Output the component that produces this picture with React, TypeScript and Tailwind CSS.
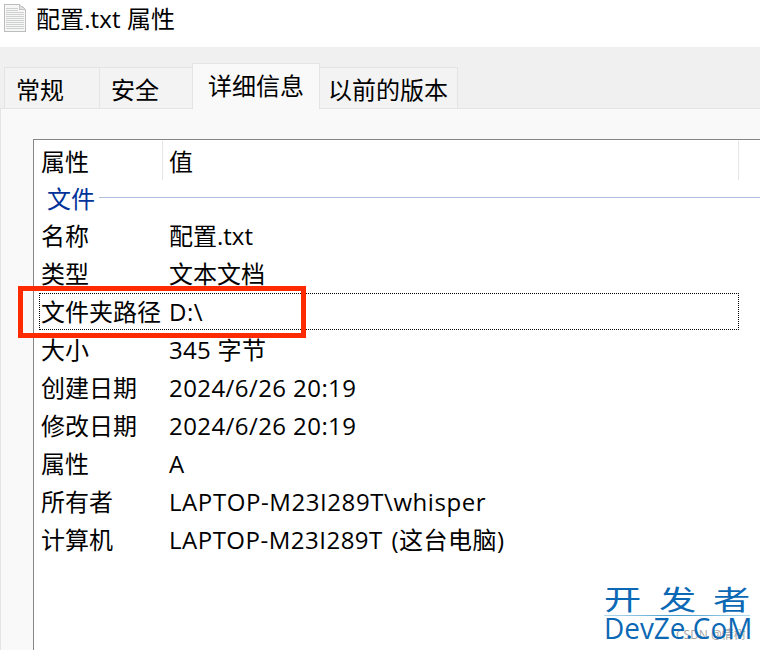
import clsx from "clsx";

const rows = [
  { name: "名称", value: "配置.txt", spacing: "tracking-normal" },
  { name: "类型", value: "文本文档", spacing: "tracking-normal" },
  { name: "文件夹路径", value: "D:\\", spacing: "tracking-[0.5px]", focused: true },
  { name: "大小", value: "345 字节", spacing: "tracking-[0.3px]" },
  { name: "创建日期", value: "2024/6/26 20:19", spacing: "tracking-[0.42px]" },
  { name: "修改日期", value: "2024/6/26 20:19", spacing: "tracking-[0.42px]" },
  { name: "属性", value: "A", spacing: "tracking-normal" },
  { name: "所有者", value: "LAPTOP-M23I289T\\whisper", spacing: "tracking-[0.58px]" },
  { name: "计算机", value: "LAPTOP-M23I289T (这台电脑)", spacing: "tracking-[0.5px] [word-spacing:2px]" },
];

const tabs = [
  { label: "常规", size: "w-[96px] pl-[11px]" },
  { label: "安全", size: "w-[93px] pl-[11px]" },
  { label: "详细信息", size: "w-[128px] pl-[15px]", active: true },
  { label: "以前的版本", size: "w-[138px] pl-[8px]" },
];

function FileIcon() {
  return (
    <svg width="22" height="28" viewBox="0 0 22 28" className="shrink-0" fill="none" shapeRendering="crispEdges">
      <path d="M.5.5h15l6 6v21H.5z" fill="#f7f7f7" stroke="#bdbdbd" />
      <path d="M15.5.5v5h6z" fill="#e3e3e3" stroke="#c4c4c4" />
      <path d="M2 4.5h12M2 6.5h12M2 8.5h18M2 10.5h18M2 12.5h18M2 14.5h18M2 16.5h18M2 18.5h18M2 20.5h18M2 22.5h18M2 24.5h18" stroke="#cfd1d1" />
    </svg>
  );
}

function Watermark() {
  return (
    <div className="absolute left-[604px] top-[584px] w-[148px] h-[62px] text-[#0a68b4]">
      <div className="flex justify-between w-[146px] h-[31px] text-[27px] leading-[31px]">
        <span className="w-[37px] origin-left scale-x-[1.38]">开</span>
        <span className="w-[37px] origin-left scale-x-[1.38]">发</span>
        <span className="w-[37px] origin-left scale-x-[1.38]">者</span>
      </div>
      <div className="h-px w-[146px] bg-linear-to-r from-[#b5dcf0] via-[#3f9ccc] to-[#b5dcf0]"></div>
      <span className="absolute left-[72px] top-[43px] text-[12px] leading-[16px] whitespace-nowrap text-[#a5a5a5]">CSDN @情树</span>
      <div className="relative w-[157px] origin-left scale-x-[0.93] -mt-px whitespace-nowrap text-[30px] leading-[26px]">DevZe.CoM</div>
    </div>
  );
}

export default function App() {
  return (
    <div className="relative flex flex-col w-[760px] h-[650px] overflow-hidden bg-white text-black text-[24px] leading-[36px] font-['Open_Sans','Noto_Sans_CJK_SC',sans-serif]">
      <header className="flex h-[47px] pl-[4px] pt-[4px] shrink-0">
        <FileIcon />
        <h1 className="ml-[10px] -mt-[3px] whitespace-nowrap tracking-[0.1px]">配置.txt 属性</h1>
      </header>

      <nav className="flex items-end h-[61px] pl-[4px] shrink-0 bg-[#f0f0f0]">
        {tabs.map((tab) => (
          <div
            key={tab.label}
            className={clsx(
              "shrink-0 border-t border-r border-[#e4e4e4] whitespace-nowrap first:border-l",
              tab.size,
              tab.active ? "h-[46px] pt-[4px] -mb-px relative bg-[#f9f9f9] -ml-px mr-0 border-l" : "h-[41px] pt-[4px] bg-[#f3f3f3]"
            )}
          >
            {tab.label}
          </div>
        ))}
      </nav>

      <main className="flex-1 border-t border-l border-[#e4e4e4] bg-[#f9f9f9] pl-[32px] pt-[30px]">
        <div className="h-full border-t border-l border-[#86868a] bg-white">
          <div className="flex h-[40px] pt-px">
            <div className="w-[129px] pl-[7px] pt-[3px] border-r border-[#e5e5e5]">属性</div>
            <div className="w-[576px] pl-[6px] pt-[3px] border-r border-[#e5e5e5]">值</div>
          </div>
          <div className="flex items-center h-[37px] pl-[13px] text-[#003399]">
            <span className="w-[52px]">文件</span>
            <div className="flex-1 h-px bg-[#b0bfdd] -mt-[2px]"></div>
          </div>
          {rows.map((row, i) => (
            <div
              key={i}
              className={clsx(
                "flex items-center ml-[5px] mb-px w-[700px] h-[37px] border border-dotted whitespace-nowrap",
                row.focused ? "border-black" : "border-transparent"
              )}
            >
              <span className="w-[129px] pl-px">{row.name}</span>
              <span className={row.spacing}>{row.value}</span>
            </div>
          ))}
        </div>
      </main>

      <div className="absolute left-[18px] top-[286px] w-[288px] h-[52px] border-[5px] border-[#ff2a00]"></div>
      <Watermark />
    </div>
  );
}
